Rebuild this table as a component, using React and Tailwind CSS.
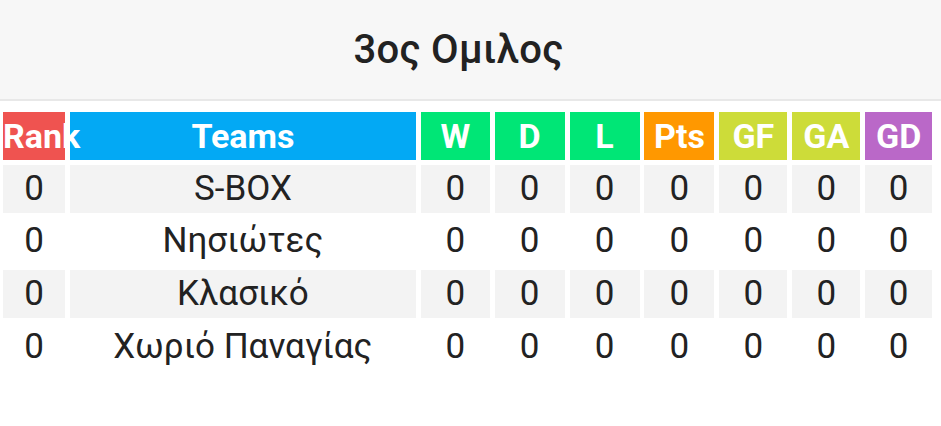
const headers = [
  { label: "Rank", bg: "bg-[#ef5350] relative z-10" },
  { label: "Teams", bg: "bg-[#03a9f4]" },
  { label: "W", bg: "bg-[#00e676]" },
  { label: "D", bg: "bg-[#00e676]" },
  { label: "L", bg: "bg-[#00e676]" },
  { label: "Pts", bg: "bg-[#ff9800]" },
  { label: "GF", bg: "bg-[#cddc39]" },
  { label: "GA", bg: "bg-[#cddc39]" },
  { label: "GD", bg: "bg-[#ba68c8]" },
];

const teams = ["S-BOX", "Νησιώτες", "Κλασικό", "Χωριό Παναγίας"];

export default function App() {
  return (
    <div className="w-[941px] h-[426px] bg-white font-['Roboto','Liberation_Sans',sans-serif] text-[#222]">
      {/* group title bar */}
      <div className="h-[101px] bg-[#f7f7f7] border-b-2 border-[#e8e8e8] flex items-center justify-center pr-6">
        <h1 className="text-[40px] font-medium text-[#222] leading-none tracking-[0.3px]">3ος Ομιλος</h1>
      </div>

      {/* standings */}
      <div className="mt-[11px] ml-[3px] grid grid-cols-[62px_346px_69px_70px_70px_70px_68px_68px_67px] gap-x-[4.9px] gap-y-[4.7px] auto-rows-[48px]">
        {headers.map((h) => (
          <div
            key={h.label}
            className={`${h.bg} text-white font-bold text-[34px] leading-[48px] text-center whitespace-nowrap`}
          >
            {h.label}
          </div>
        ))}
        {teams.map((team, i) =>
          [0, team, 0, 0, 0, 0, 0, 0, 0].map((v, j) => (
            <div
              key={`${i}-${j}`}
              className={`${i % 2 === 0 ? "bg-[#f3f3f3]" : "bg-white"} text-[35px] leading-[48px] text-center whitespace-nowrap`}
            >
              {v}
            </div>
          ))
        )}
      </div>
    </div>
  );
}
